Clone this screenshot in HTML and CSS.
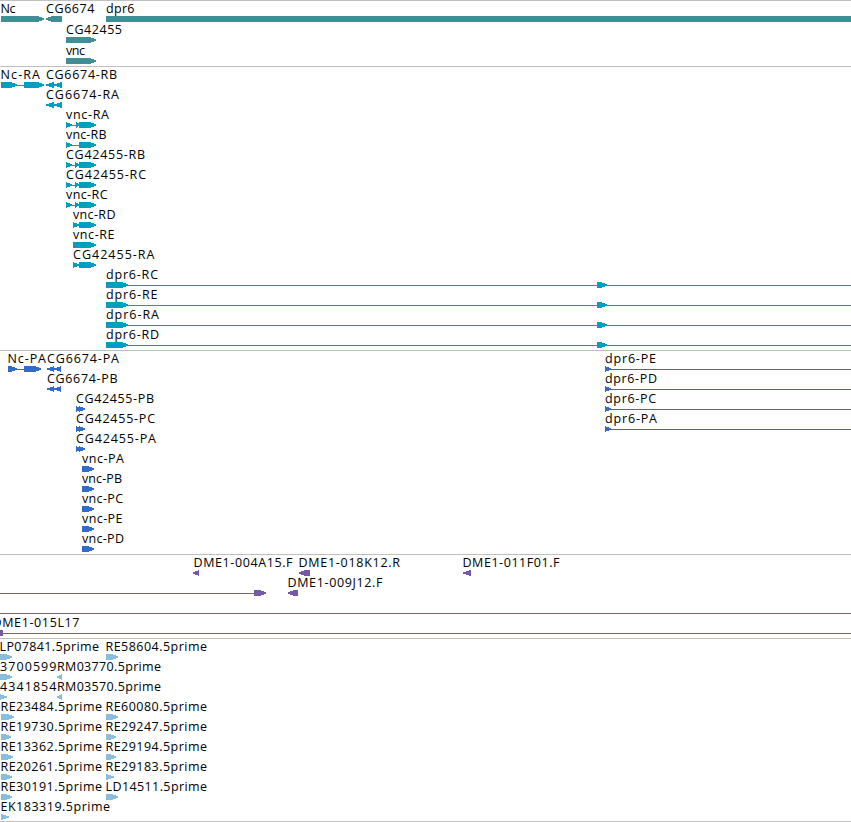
FILE: index.html
```html
<!DOCTYPE html>
<html lang="en">
<head>
	<meta charset="UTF-8">
	<title>Genome tracks</title>
	<link rel="stylesheet" href="styles.css">
</head>
<body>
	<div id="tracks"></div>
	<script src="tracks.js"></script>
</body>
</html>
```
FILE: styles.css
```css
body {
	margin: 0;
	background: #fff;
	overflow: hidden;
}
#tracks {
	width: 851px;
	overflow: hidden;
	border-bottom: 1px solid #c0c0c0;
}
.track {
	border-top: 1px solid #c0c0c0;
	padding-bottom: 3px;
}
.row {
	display: block;
	width: 100%;
	height: 20px;
	overflow: visible;
	shape-rendering: crispEdges;
}
.row text {
	font: 12.5px "Open Sans", "Noto Sans", sans-serif;
	fill: #000;
}
.gene {
	padding-bottom: 2px;
	fill: #3f8f94;
}
.gene .row {
	height: 21px;
}
.transcript {
	fill: #009fc1;
}
.protein {
	fill: #316bcd;
}
.bac {
	fill: #7558a8;
}
.est {
	padding-bottom: 2px;
	fill: #89bddd;
}
```
FILE: tracks.js
```js
// feature: [label, x, label width, strand, [[start, end], ...], [line start, line end]]
var dpr = [[106, 128], [597, 607]];
var tracks = [
	{type: 'gene', rows: [
		[['Nc', 0.5, 15.5, 1, [[1, 44]]], ['CG6674', 46, 49, -1, [[46, 62]]], ['dpr6', 106, 29, 1, [[106, 900]]]],
		[['CG42455', 66, 56.5, 1, [[66, 96]]]],
		[['vnc', 66, 19.5, 1, [[66, 96]]]]
	]},
	{type: 'transcript', rows: [
		[['Nc-RA', 0.5, 40, 1, [[1, 17], [24, 44]], [1, 44]], ['CG6674-RB', 46, 71.5, -1, [[46, 54], [54, 62]], [46, 62]]],
		[['CG6674-RA', 46, 73.5, -1, [[46, 54], [54, 62]], [46, 62]]],
		[['vnc-RA', 66, 43.5, 1, [[66, 72], [76, 80], [79, 96]], [66, 96]]],
		[['vnc-RB', 66, 41, 1, [[66, 72], [79, 96]], [66, 96]]],
		[['CG42455-RB', 66, 79.5, 1, [[66, 72], [75, 79], [79, 96]], [66, 96]]],
		[['CG42455-RC', 66, 80.5, 1, [[66, 72], [75, 79], [79, 96]], [66, 96]]],
		[['vnc-RC', 66, 42, 1, [[66, 72], [75, 79], [79, 96]], [66, 96]]],
		[['vnc-RD', 73, 43, 1, [[73, 79], [79, 96]], [73, 96]]],
		[['vnc-RE', 73, 42, 1, [[73, 96]]]],
		[['CG42455-RA', 73, 82, 1, [[73, 79], [79, 96]], [73, 96]]],
		[['dpr6-RC', 106, 52.5, 1, dpr, [106, 851]]],
		[['dpr6-RE', 106, 52, 1, dpr, [106, 851]]],
		[['dpr6-RA', 106, 53.5, 1, dpr, [106, 851]]],
		[['dpr6-RD', 106, 53.5, 1, dpr, [106, 851]]]
	]},
	{type: 'protein', rows: [
		[['Nc-PA', 7.5, 39, 1, [[8, 17], [24, 41]], [8, 41]], ['CG6674-PA', 47, 72.5, -1, [[47, 54], [54, 61]]], ['dpr6-PE', 605, 51.5, 1, [[605, 611]], [605, 851]]],
		[['CG6674-PB', 47, 71, -1, [[47, 54], [54, 61]]], ['dpr6-PD', 605, 52.5, 1, [[605, 611]], [605, 851]]],
		[['CG42455-PB', 76, 78.5, 1, [[76, 81], [79, 85]]], ['dpr6-PC', 605, 51.5, 1, [[605, 611]], [605, 851]]],
		[['CG42455-PC', 76, 79.5, 1, [[76, 81], [79, 85]]], ['dpr6-PA', 605, 52.5, 1, [[605, 611]], [605, 851]]],
		[['CG42455-PA', 76, 80.5, 1, [[76, 81], [79, 85]]]],
		[['vnc-PA', 82, 42.5, 1, [[82, 94]]]],
		[['vnc-PB', 82, 40.5, 1, [[82, 94]]]],
		[['vnc-PC', 82, 41.5, 1, [[82, 94]]]],
		[['vnc-PE', 82, 41, 1, [[82, 94]]]],
		[['vnc-PD', 82, 42.5, 1, [[82, 94]]]]
	]},
	{type: 'bac', rows: [
		[['DME1-004A15.F', 193.5, 99.5, -1, [[193, 199]]], ['DME1-018K12.R', 298.5, 102, -1, [[299, 310]]], ['DME1-011F01.F', 462.5, 97.5, -1, [[463, 471]]]],
		[['', 0, 0, 1, [[254, 266]], [0, 266]], ['DME1-009J12.F', 287.5, 95.5, -1, [[288, 298]]]],
		[['', 0, 0, 1, [], [0, 851]]],
		[['DME1-015L17', -7.5, 87.5, 0, [[0, 3]], [0, 851]]]
	]},
	{type: 'est', rows: [
		[['LP07841.5prime', -0.5, 100, 1, [[0, 12]]], ['RE58604.5prime', 105.5, 102, 1, [[106, 118]]]],
		[['3700599', 0, 57, 1, [[0, 12]]], ['RM03770.5prime', 57, 104.5, -1, [[57, 62]]]],
		[['4341854', 0, 57, 1, [[0, 7]]], ['RM03570.5prime', 57, 104.5, -1, [[57, 62]]]],
		[['RE23484.5prime', 0.5, 102, 1, [[1, 14]]], ['RE60080.5prime', 105.5, 102, 1, [[106, 118]]]],
		[['RE19730.5prime', 0.5, 102, 1, [[1, 11]]], ['RE29247.5prime', 105.5, 102, 1, [[106, 116]]]],
		[['RE13362.5prime', 0.5, 102, 1, [[1, 13]]], ['RE29194.5prime', 105.5, 102, 1, [[106, 116]]]],
		[['RE20261.5prime', 0.5, 102, 1, [[1, 12]]], ['RE29183.5prime', 105.5, 102, 1, [[106, 114]]]],
		[['RE30191.5prime', 0.5, 102, 1, [[1, 12]]], ['LD14511.5prime', 105.5, 102, 1, [[106, 118]]]],
		[['EK183319.5prime', 0.5, 110, 1, [[1, 9]]]]
	]}
];

// one exon, the tip points along the strand
function exon(a, b, strand){
	var w = b - a;
	var tip = w < 9 ? w : 6;
	if(strand == 0){
		return 'M' + a + ' 15H' + b + 'V21H' + a + 'z';
	}
	if(strand > 0){
		return 'M' + a + ' 15H' + (b - tip) + 'L' + b + ' 17.4V18.6L' + (b - tip) + ' 21H' + a + 'z';
	}
	return 'M' + b + ' 15H' + (a + tip) + 'L' + a + ' 17.4V18.6L' + (a + tip) + ' 21H' + b + 'z';
}

function feature(f){
	var s = '';
	if(f[5]){
		s += '<rect x="' + f[5][0] + '" y="18" width="' + (f[5][1] - f[5][0]) + '" height="1"/>';
	}
	for(var i=0;i<f[4].length;i++){
		s += '<path d="' + exon(f[4][i][0], f[4][i][1], f[3]) + '"/>';
	}
	if(f[0]){
		s += '<text x="' + f[1] + '" y="12" textLength="' + (f[2] - 0.5) + '">' + f[0] + '</text>';
	}
	return s;
}

document.getElementById('tracks').innerHTML = tracks.map(function(t){
	return '<div class="track ' + t.type + '">' + t.rows.map(function(r){
		return '<svg class="row">' + r.map(feature).join('') + '</svg>';
	}).join('') + '</div>';
}).join('');
```
